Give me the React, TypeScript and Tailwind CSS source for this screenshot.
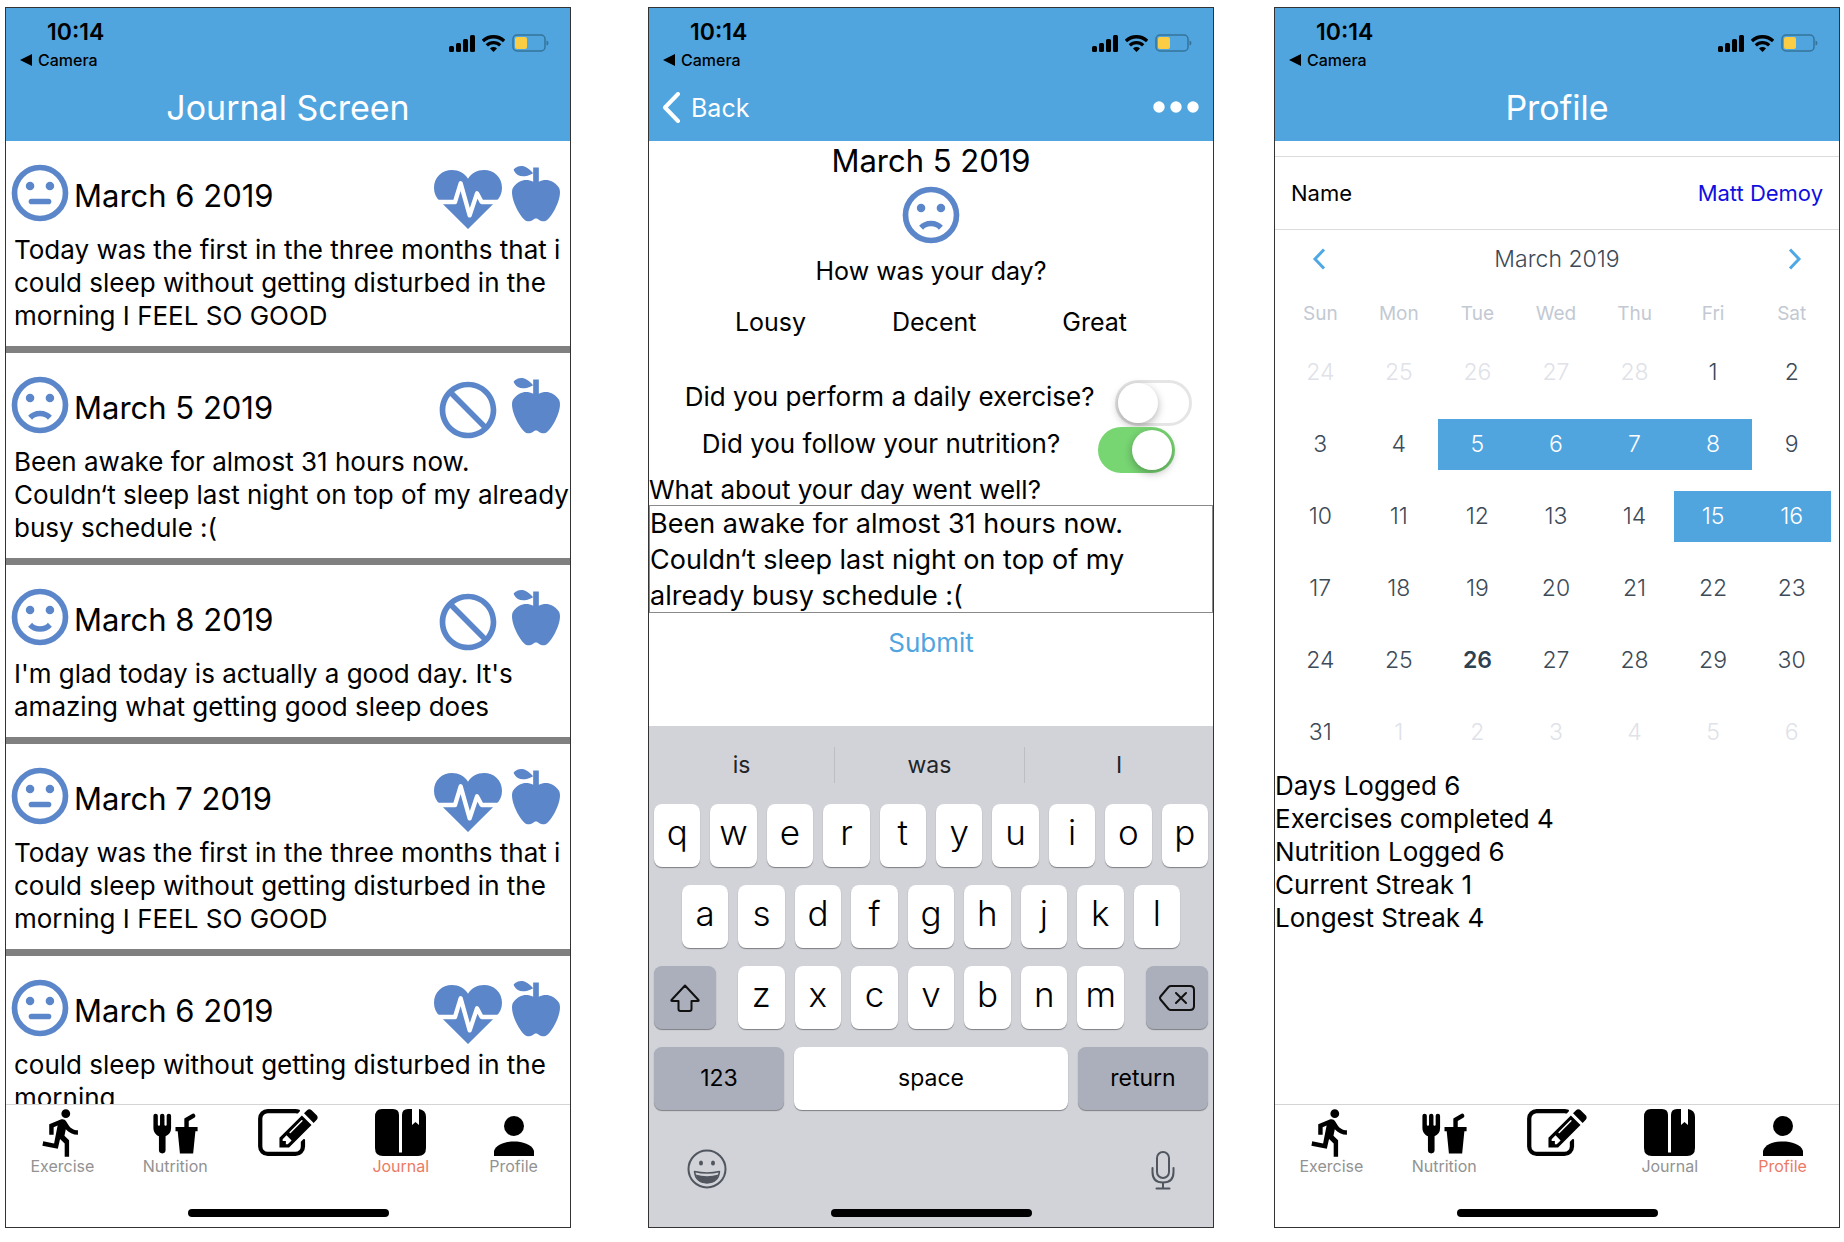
import { useState, type ReactNode } from "react";
import { MdBlock, MdDirectionsRun } from "react-icons/md";

type Mood = "neutral" | "sad" | "happy";

const mouths: Record<Mood, string> = {
  neutral: "M9 14h6a1 1 0 0 1 0 2H9a1 1 0 0 1 0-2z",
  sad: "M12 14c1.75 0 3.29.72 4.19 1.81l-1.42 1.42C14.32 16.5 13.25 16 12 16s-2.32.5-2.77 1.23l-1.42-1.42C8.71 14.72 10.25 14 12 14z",
  happy:
    "M12 17.23c-1.75 0-3.29-.73-4.19-1.81L9.23 14c.45.72 1.52 1.23 2.77 1.23s2.32-.51 2.77-1.23l1.42 1.42c-.9 1.08-2.44 1.81-4.19 1.81z",
};

function Face({ mood }: { mood: Mood }) {
  return (
    <svg viewBox="0 0 24 24" className="size-[68px] shrink-0 text-[#5b86c9]" fill="currentColor" role="img" aria-label={mood}>
      <circle cx="12" cy="12" r="9" fill="none" stroke="currentColor" strokeWidth="2" />
      <circle cx="8.5" cy="9.5" r="1.5" />
      <circle cx="15.5" cy="9.5" r="1.5" />
      <path d={mouths[mood]} />
    </svg>
  );
}

function HeartPulse() {
  return (
    <svg viewBox="0 -18 204 204" className="size-[68px] text-[#5b86c9]" role="img" aria-label="Exercised">
      <path
        fill="currentColor"
        d="M102 177L18 94C6 82 0 70 0 53 0 22 24 0 54 0c20 0 38 10 48 26C112 10 130 0 150 0c30 0 54 22 54 53 0 17-6 29-18 41z"
      />
      <path d="M-4 96H63L80 40l27 96 22-66 14 26h65" fill="none" stroke="#fff" strokeWidth="13" strokeLinejoin="round" />
    </svg>
  );
}

function Apple() {
  return (
    <svg viewBox="0 0 24 24" className="size-[68px] text-[#5b86c9]" fill="currentColor" role="img" aria-label="Nutrition followed">
      <path d="M20 10c2 3-3 12-5 12s-2-1-3-1-1 1-3 1-7-9-5-12 5-3 7-2V5C5.38 8.07 4.11 3.78 4.11 3.78S6.77.19 11 5V3h2v5c2-1 5-1 7 2z" />
    </svg>
  );
}

function ForkDrink() {
  return (
    <svg viewBox="0 0 24 24" className="size-[53px]" fill="currentColor" aria-hidden="true">
      <path d="M3 3a1 1 0 0 0-1 1v5.5c0 1.69 1.03 3.13 2.5 3.72v6.28a1.5 1.5 0 0 0 3 0v-6.28A4 4 0 0 0 10 9.5V4a1 1 0 0 0-2 0v4a.5.5 0 0 1-1 0V4a1 1 0 0 0-2 0v4a.5.5 0 0 1-1 0V4a1 1 0 0 0-1-1zM19.88 3c-.13 0-.26.09-.38.16L16 5.25V9h-4v2h1l1 10h6l1-10h1V9h-4V6.34l2.5-1.5c.5-.28.63-.84.34-1.34-.21-.36-.58-.54-.96-.5z" />
    </svg>
  );
}

function Compose() {
  return (
    <svg viewBox="0 128 1792 1408" className="h-[47px] w-[60px]" fill="currentColor" aria-hidden="true">
      <path d="M888 1184l116-116-152-152-116 116v56h96v96h56zm440-720q-16-16-33 1l-350 350q-17 17-1 33t33-1l350-350q17-17 1-33zm80 594v190q0 119-84.5 203.5t-203.5 84.5h-832q-119 0-203.5-84.5t-84.5-203.5v-832q0-119 84.5-203.5t203.5-84.5h832q63 0 117 25 15 7 18 23 3 17-9 29l-49 49q-14 14-32 8-23-6-45-6h-832q-66 0-113 47t-47 113v832q0 66 47 113t113 47h832q66 0 113-47t47-113v-126q0-13 9-22l64-64q15-15 35-7t20 29zm-96-738l288 288-672 672h-288v-288zm444 132l-92 92-288-288 92-92q28-28 68-28t68 28l152 152q28 28 28 68t-28 68z" />
    </svg>
  );
}

function Book() {
  return (
    <svg viewBox="0 0 51 47" className="h-[47px] w-[51px]" fill="currentColor" aria-hidden="true">
      <path d="M7 0h11q6 0 6 6v37.500h3V6q0-6 6-6h4v16l3.500-3 3.500 3V0q7 1 7 8v31q0 8-8 8H8q-8 0-8-8V8Q0 0 7 0z" />
    </svg>
  );
}

function Person() {
  return (
    <svg viewBox="0 0 40 40" className="h-10 w-10" fill="currentColor" aria-hidden="true">
      <circle cx="20" cy="10" r="10" />
      <path d="M0 40v-5c2-7 12-9.500 20-9.500S38 28 40 35v5z" />
    </svg>
  );
}

function StatusBar() {
  return (
    <div className="flex h-[68px] items-start justify-between pt-[10px] pr-[21px] pl-[14px] text-black">
      <div>
        <div className="pl-[27px] text-[23px] leading-7 font-semibold">10:14</div>
        <a href="#camera" className="mt-1 flex items-center gap-[6px] text-base leading-5 font-medium">
          <svg viewBox="0 0 12 12" className="size-3" aria-hidden="true">
            <path d="M0 6L12 0v12z" />
          </svg>
          Camera
        </a>
      </div>
      <div className="mt-4 flex h-[18px] items-center gap-[7px]">
        <svg viewBox="0 0 26 18" className="h-[18px] w-[26px]" aria-label="Signal" role="img">
          <rect x="0" y="12" width="5" height="6" rx="1.500" />
          <rect x="7" y="9" width="5" height="9" rx="1.500" />
          <rect x="14" y="5" width="5" height="13" rx="1.500" />
          <rect x="21" y="1" width="5" height="17" rx="1.500" />
        </svg>
        <svg viewBox="1 1.500 21 15.500" className="h-[17px] w-[23px]" fill="none" stroke="#000" strokeWidth="3" aria-label="Wi-Fi" role="img">
          <path d="M1.800 7a14 14 0 0 1 19.400 0M5.400 11a8.800 8.800 0 0 1 12.200 0" />
          <path d="M11.500 17L8.300 13.800a4.600 4.600 0 0 1 6.400 0z" fill="#000" stroke="none" />
        </svg>
        <svg viewBox="0 0 37 18" className="h-[18px] w-[37px]" aria-label="Battery" role="img">
          <rect x="1" y="1" width="32" height="16" rx="4" fill="none" stroke="#34739b" strokeWidth="1.500" />
          <rect x="3" y="3" width="12" height="12" rx="2" fill="#fbcd45" />
          <path d="M34.500 6.500q2 .5 2 2.500t-2 2.500z" fill="#34739b" />
        </svg>
      </div>
    </div>
  );
}

function Header({ children }: { children: ReactNode }) {
  return (
    <header className="shrink-0 bg-[#50a5df]">
      <StatusBar />
      <div className="flex h-[65px] items-center pb-[2px] text-white">{children}</div>
    </header>
  );
}

function Title({ children }: { children: ReactNode }) {
  return <h1 className="w-full text-center text-[34px] leading-10">{children}</h1>;
}

function HomeBar() {
  return <div className="mx-auto h-2 w-[201px] rounded-full bg-black" />;
}

const tabs = [
  { name: "Exercise", icon: <MdDirectionsRun className="size-[53px]" />, place: "flex h-[51px] items-start pt-px" },
  { name: "Nutrition", icon: <ForkDrink />, place: "flex h-[51px] items-start pt-[2px]" },
  { name: "", icon: <Compose />, place: "flex h-[51px] items-end" },
  { name: "Journal", icon: <Book />, place: "flex h-[51px] items-end" },
  { name: "Profile", icon: <Person />, place: "flex h-[51px] items-end" },
];

function TabBar({ active }: { active: string }) {
  return (
    <footer className="flex h-[123px] shrink-0 flex-col justify-between border-t border-[#d4d4d4] bg-white pb-[10px]">
      <nav className="grid grid-cols-5">
        {tabs.map((tab) => (
          <a key={tab.name} href={`#${tab.name}`} aria-label={tab.name || "New entry"} className="flex flex-col items-center text-black">
            <span className={tab.place}>{tab.icon}</span>
            <span className={tab.name === active ? "text-base leading-5 text-[#ec7a65]" : "text-base leading-5 text-[#929292]"}>
              {tab.name}
            </span>
          </a>
        ))}
      </nav>
      <HomeBar />
    </footer>
  );
}

const threeMonths = "Today was the first in the three months that i could sleep without getting disturbed in the morning I FEEL SO GOOD";

const entries: { date: string; mood: Mood; exercised: boolean; text: string }[] = [
  { date: "March 6 2019", mood: "neutral", exercised: true, text: threeMonths },
  {
    date: "March 5 2019",
    mood: "sad",
    exercised: false,
    text: "Been awake for almost 31 hours now. Couldn‘t sleep last night on top of my already busy schedule :(",
  },
  { date: "March 8 2019", mood: "happy", exercised: false, text: "I'm glad today is actually a good day. It's amazing what getting good sleep does" },
  { date: "March 7 2019", mood: "neutral", exercised: true, text: threeMonths },
  { date: "March 6 2019", mood: "neutral", exercised: true, text: "could sleep without getting disturbed in the morning" },
];

function Journal() {
  return (
    <>
      <Header>
        <Title>Journal Screen</Title>
      </Header>
      <main className="min-h-0 flex-1 overflow-hidden">
        {entries.map((entry, i) => (
          <article key={i} className="border-b-[7px] border-[#808080] pt-[18px] pb-[14px]">
            <div className="flex h-[68px] items-start">
              <Face mood={entry.mood} />
              <h2 className="flex-1 pt-[17px] text-[31px] leading-10">{entry.date}</h2>
              <div className="pt-[5px]">
                {entry.exercised ? <HeartPulse /> : <MdBlock className="size-[68px] rotate-90 text-[#5b86c9]" aria-label="No exercise" />}
              </div>
              <Apple />
            </div>
            <p className="pt-[6px] pl-2 text-[26px] leading-[33px]">{entry.text}</p>
          </article>
        ))}
      </main>
      <TabBar active="Journal" />
    </>
  );
}

function Toggle({ id, label, initial }: { id: string; label: string; initial: boolean }) {
  const [on, setOn] = useState(initial);
  return (
    <div className="flex h-[47px] items-start justify-evenly">
      <label htmlFor={id} className="ml-[15px] text-[26px] leading-[33px]">
        {label}
      </label>
      <input
        id={id}
        type="checkbox"
        role="switch"
        checked={on}
        onChange={() => setOn(!on)}
        className="flex h-[46px] w-[77px] shrink-0 appearance-none items-center rounded-full border-[3px] border-[#e5e5e5] bg-white before:size-10 before:rounded-full before:bg-white before:shadow-[0_3px_8px_rgba(0,0,0,0.3)] checked:justify-end checked:border-[#77d572] checked:bg-[#77d572]"
      />
    </div>
  );
}

function Key({ children, className, label }: { children: ReactNode; className: string; label?: string }) {
  return (
    <button
      type="button"
      aria-label={label}
      className={`flex h-[63px] items-center justify-center rounded-lg shadow-[0_1px_1px_rgba(0,0,0,0.4)] ${className}`}
    >
      {children}
    </button>
  );
}

function Letters({ row }: { row: string }) {
  return (
    <>
      {row.split("").map((c) => (
        <Key key={c} className="min-w-0 flex-1 bg-white pb-[6px] text-[35px] font-[350] text-black">
          {c}
        </Key>
      ))}
    </>
  );
}

function Keyboard() {
  return (
    <section aria-label="Keyboard" className="flex shrink-0 flex-col bg-[#d1d3d9] pb-[10px]">
      <div className="grid h-[78px] grid-cols-[185fr_191fr_188fr] items-center text-[23px] text-[#222428]">
        <button type="button" className="h-9">is</button>
        <button type="button" className="h-9 border-x border-[#bcbec4]">was</button>
        <button type="button" className="h-9">I</button>
      </div>
      <div className="flex flex-col gap-[18px] px-[5px]">
        <div className="flex gap-[10px]">
          <Letters row="qwertyuiop" />
        </div>
        <div className="flex gap-[10px] px-7">
          <Letters row="asdfghjkl" />
        </div>
        <div className="flex gap-[22px]">
          <Key label="Shift" className="w-[62px] bg-[#abafbb]">
            <svg viewBox="0 0 30 28" className="h-7 w-[30px]" fill="none" stroke="#111" strokeWidth="2" strokeLinejoin="round" aria-hidden="true">
              <path d="M15 1.500L1.500 16q-.5 1 .5 1h6.500v8q0 2 2 2h9q2 0 2-2v-8H28q1 0 .5-1z" />
            </svg>
          </Key>
          <div className="flex flex-1 gap-[10px]">
            <Letters row="zxcvbnm" />
          </div>
          <Key label="Delete" className="w-[62px] bg-[#abafbb]">
            <svg viewBox="0 0 36 26" className="h-[26px] w-9" fill="none" stroke="#111" strokeWidth="2" strokeLinecap="round" strokeLinejoin="round" aria-hidden="true">
              <path d="M12 1h19q4 0 4 4v16q0 4-4 4H12q-1.500 0-2.500-1L1.500 14.500q-1-1.500 0-3L9.500 2q1-1 2.500-1zM17 8l10 10M27 8L17 18" />
            </svg>
          </Key>
        </div>
        <div className="flex gap-[10px] text-[23px] text-black">
          <Key className="w-[130px] bg-[#abafbb]">123</Key>
          <Key className="flex-1 bg-white">space</Key>
          <Key className="w-[130px] bg-[#abafbb]">return</Key>
        </div>
      </div>
      <div className="flex h-[99px] items-center justify-between pt-5 pr-[38px] pb-[2px] pl-[38px] text-[#50555e]">
        <button type="button" aria-label="Emoji">
          <svg viewBox="0 0 40 40" className="size-10" fill="none" stroke="currentColor" strokeWidth="2" aria-hidden="true">
            <circle cx="20" cy="20" r="18.500" />
            <ellipse cx="14" cy="14" rx="2" ry="2.500" fill="currentColor" stroke="none" />
            <ellipse cx="26" cy="14" rx="2" ry="2.500" fill="currentColor" stroke="none" />
            <path d="M7.500 22.500q12.500 3 25 0-1 11-12.500 11.500Q8.500 33.500 7.500 22.500z" strokeWidth="1.500" strokeLinejoin="round" />
            <path d="M8.500 25.500q11.500 3.500 23 0-2.500 8-11.500 8.500-9-.5-11.500-8.500z" fill="currentColor" stroke="none" />
          </svg>
        </button>
        <button type="button" aria-label="Dictate" className="pt-1">
          <svg viewBox="0 0 24 39" className="h-[39px] w-6" fill="none" stroke="currentColor" strokeWidth="2" strokeLinecap="round" aria-hidden="true">
            <rect x="6" y="1" width="12" height="26" rx="6" />
            <path d="M1.500 17v4q0 10.500 10.500 10.500T22.500 21v-4M12 31.500V37.500M5.500 37.500h13" />
          </svg>
        </button>
      </div>
      <HomeBar />
    </section>
  );
}

function Entry() {
  return (
    <>
      <Header>
        <div className="flex w-full items-center justify-between pr-[14px] pl-[13px]">
          <a href="#back" className="flex items-center gap-[10px] text-[25px] leading-8">
            <svg viewBox="0 0 19 31" className="h-[31px] w-[19px]" fill="none" stroke="#fff" strokeWidth="4" strokeLinecap="round" strokeLinejoin="round" aria-hidden="true">
              <path d="M16 2L3 15.500 16 29" />
            </svg>
            Back
          </a>
          <button type="button" aria-label="More" className="pb-[2px]">
            <svg viewBox="0 0 46 12" className="h-3 w-[46px]" fill="#fff" aria-hidden="true">
              <circle cx="6" cy="6" r="5.700" />
              <circle cx="23" cy="6" r="5.700" />
              <circle cx="40" cy="6" r="5.700" />
            </svg>
          </button>
        </div>
      </Header>
      <main className="flex min-h-0 flex-1 flex-col">
        <h2 className="text-center text-[31px] leading-10">March 5 2019</h2>
        <div className="flex justify-center">
          <Face mood="sad" />
        </div>
        <p className="mt-[6px] text-center text-[25px] leading-[33px]">How was your day?</p>
        <div className="mt-[18px] mb-[41px] flex justify-evenly text-[25px] leading-[33px]">
          <button type="button">Lousy</button>
          <button type="button">Decent</button>
          <button type="button">Great</button>
        </div>
        <Toggle id="exercise" label="Did you perform a daily exercise?" initial={false} />
        <Toggle id="nutrition" label="Did you follow your nutrition?" initial={true} />
        <label htmlFor="notes" className="text-[26px] leading-[31px]">
          What about your day went well?
        </label>
        <textarea
          id="notes"
          rows={3}
          defaultValue="Been awake for almost 31 hours now. Couldn‘t sleep last night on top of my already busy schedule :("
          className="block h-[108px] w-full shrink-0 resize-none overflow-hidden border border-[#8a8a8a] text-[27px] leading-9 outline-none"
        />
        <button type="button" className="mx-auto mt-[13px] text-[26px] leading-[33px] text-[#50a5df]">
          Submit
        </button>
      </main>
      <Keyboard />
    </>
  );
}

const days = ["Sun", "Mon", "Tue", "Wed", "Thu", "Fri", "Sat"];
const weeks = Array.from({ length: 6 }, (_, w) => Array.from({ length: 7 }, (_, d) => w * 7 + d - 4));
const logged = [5, 6, 7, 8, 15, 16];

function dayStyle(n: number) {
  if (n < 1 || n > 31) return "text-[#dfe2e8] font-[350]";
  if (logged.includes(n)) return "bg-[#50a5df] text-white font-[350]";
  if (n === 26) return "text-[#2d4150] font-semibold";
  return "text-[#3d4a57] font-[350]";
}

function Chevron({ d }: { d: string }) {
  return (
    <svg viewBox="0 0 14 22" className="h-[22px] w-[14px]" fill="none" stroke="#4fa8e4" strokeWidth="3" aria-hidden="true">
      <path d={d} />
    </svg>
  );
}

const stats = ["Days Logged 6", "Exercises completed 4", "Nutrition Logged 6", "Current Streak 1", "Longest Streak 4"];

function Profile() {
  return (
    <>
      <Header>
        <Title>Profile</Title>
      </Header>
      <main className="min-h-0 flex-1 pt-[15px]">
        <div className="flex h-[74px] items-center justify-between border-y border-[#dcdcdc] px-4 text-[22px]">
          <span>Name</span>
          <a href="#name" className="text-[#0f10e0]">Matt Demoy</a>
        </div>
        <div className="pr-2 pl-[6px]">
          <div className="flex h-[58px] items-center justify-between pr-[29px] pl-[31px] text-[23px] font-[350] text-[#3d4a57]">
            <button type="button" aria-label="Previous month">
              <Chevron d="M12 1.500L3 11l9 9.500" />
            </button>
            <h2>March 2019</h2>
            <button type="button" aria-label="Next month">
              <Chevron d="M2 1.500L11 11l-9 9.500" />
            </button>
          </div>
          <table className="w-full table-fixed">
            <thead>
              <tr className="h-12 text-[19px] text-[#c3c9d3]">
                {days.map((d) => (
                  <th key={d} scope="col" className="p-0 pt-1 text-center font-normal">
                    {d}
                  </th>
                ))}
              </tr>
            </thead>
            <tbody>
              {weeks.map((week) => (
                <tr key={week[0]} className="h-[72px]">
                  {week.map((n) => (
                    <td key={n} className="p-0">
                      <button type="button" className={`block h-[51px] w-full text-[23px] ${dayStyle(n)}`}>
                        {n < 1 ? n + 28 : n > 31 ? n - 31 : n}
                      </button>
                    </td>
                  ))}
                </tr>
              ))}
            </tbody>
          </table>
        </div>
        <ul className="pt-px text-[26px] leading-[33px]">
          {stats.map((s) => (
            <li key={s}>{s}</li>
          ))}
        </ul>
      </main>
      <TabBar active="Profile" />
    </>
  );
}

function Phone({ children, className }: { children: ReactNode; className: string }) {
  return <section className={`flex min-w-0 flex-1 flex-col overflow-hidden border border-[#333] bg-white ${className}`}>{children}</section>;
}

export default function App() {
  return (
    <div className="flex h-screen bg-white pt-[7px] pr-1 pb-[14px] pl-[5px] font-['Inter','Liberation_Sans',sans-serif] text-black">
      <Phone className="mr-[77px]">
        <Journal />
      </Phone>
      <Phone className="mr-[60px]">
        <Entry />
      </Phone>
      <Phone className="">
        <Profile />
      </Phone>
    </div>
  );
}
